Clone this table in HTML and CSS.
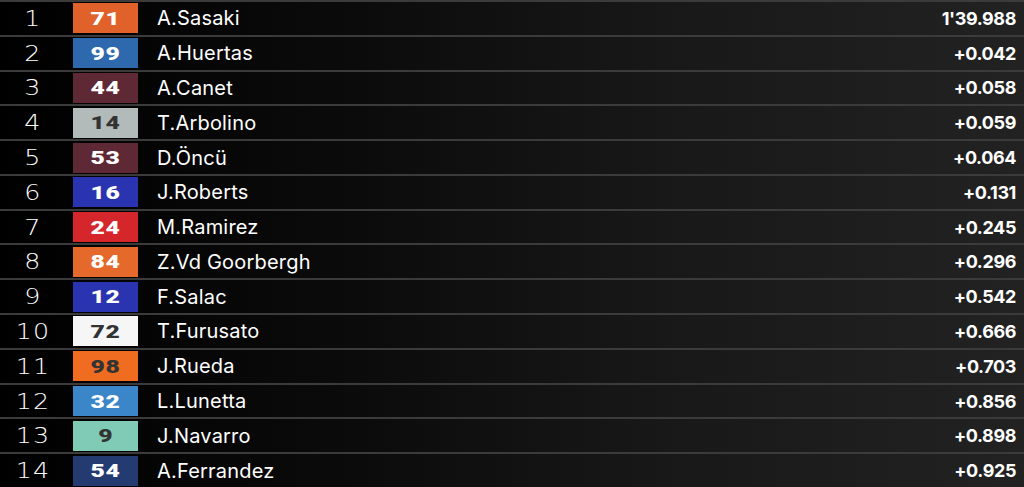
FILE: index.html
```html
<!DOCTYPE html>
<html>
<head>
<meta charset="utf-8">
<link rel="stylesheet" href="styles.css">
</head>
<body>
<div class="board">
  <div class="row"><span class="pos">1</span><span class="badge b-orange"><span class="num">71</span></span><span class="name">A.Sasaki</span><span class="time">1'39.988</span></div>
  <div class="row"><span class="pos">2</span><span class="badge b-blue"><span class="num">99</span></span><span class="name">A.Huertas</span><span class="time">+0.042</span></div>
  <div class="row"><span class="pos">3</span><span class="badge b-maroon"><span class="num">44</span></span><span class="name">A.Canet</span><span class="time">+0.058</span></div>
  <div class="row"><span class="pos">4</span><span class="badge b-grey dark"><span class="num">14</span></span><span class="name">T.Arbolino</span><span class="time">+0.059</span></div>
  <div class="row"><span class="pos">5</span><span class="badge b-maroon"><span class="num">53</span></span><span class="name">D.Öncü</span><span class="time">+0.064</span></div>
  <div class="row"><span class="pos">6</span><span class="badge b-royal"><span class="num">16</span></span><span class="name">J.Roberts</span><span class="time">+0.131</span></div>
  <div class="row"><span class="pos">7</span><span class="badge b-red"><span class="num">24</span></span><span class="name">M.Ramirez</span><span class="time">+0.245</span></div>
  <div class="row"><span class="pos">8</span><span class="badge b-orange2"><span class="num">84</span></span><span class="name">Z.Vd Goorbergh</span><span class="time">+0.296</span></div>
  <div class="row"><span class="pos">9</span><span class="badge b-royal"><span class="num">12</span></span><span class="name">F.Salac</span><span class="time">+0.542</span></div>
  <div class="row"><span class="pos">10</span><span class="badge b-white dark"><span class="num">72</span></span><span class="name">T.Furusato</span><span class="time">+0.666</span></div>
  <div class="row"><span class="pos">11</span><span class="badge b-orange3 dark"><span class="num">98</span></span><span class="name">J.Rueda</span><span class="time">+0.703</span></div>
  <div class="row"><span class="pos">12</span><span class="badge b-sky"><span class="num">32</span></span><span class="name">L.Lunetta</span><span class="time">+0.856</span></div>
  <div class="row"><span class="pos">13</span><span class="badge b-teal dark"><span class="num">9</span></span><span class="name">J.Navarro</span><span class="time">+0.898</span></div>
  <div class="row"><span class="pos">14</span><span class="badge b-navy"><span class="num">54</span></span><span class="name">A.Ferrandez</span><span class="time">+0.925</span></div>
</div>
</body>
</html>
```

FILE: styles.css
```css
html, body {
  margin: 0;
  padding: 0;
  background: #000;
}
.board {
  width: 1024px;
  height: 487px;
  display: grid;
  grid-template-rows: repeat(14, 1fr);
  background: linear-gradient(to right, #000 0%, #0b0b0b 35%, #181818 65%, #222 100%);
  font-family: "Inter", "Noto Sans", sans-serif;
  color: #fff;
  overflow: hidden;
}
.row {
  display: flex;
  align-items: center;
  border-top: 2px solid #3b3b3b;
  box-sizing: border-box;
}
.pos {
  width: 66px;
  text-align: center;
  font-family: "DejaVu Sans", sans-serif;
  font-weight: 200;
  font-size: 22px;
  letter-spacing: 1px;
  transform: scaleX(1.15);
}
.badge {
  margin-left: 7px;
  width: 65px;
  height: 30px;
  display: flex;
  align-items: center;
  justify-content: center;
  color: #fff;
}
.num {
  display: inline-block;
  font-family: "Roboto", "DejaVu Sans", sans-serif;
  font-weight: 900;
  font-size: 19px;
  letter-spacing: 0.5px;
  transform: scaleX(1.3);
}
.badge.dark { color: #333; }
.b-orange { background: #e0622a; }
.b-orange2 { background: #e5692b; }
.b-orange3 { background: #f06c20; }
.b-blue { background: #2f69ad; }
.b-maroon { background: #5e2935; }
.b-grey { background: #b3baba; }
.b-royal { background: #2a34b0; }
.b-red { background: #d5262c; }
.b-white { background: #f6f6f6; }
.b-sky { background: #3a86c8; }
.b-teal { background: #7fcbb6; }
.b-navy { background: #243b72; }
.name {
  margin-left: 19px;
  font-size: 20px;
  letter-spacing: 0.2px;
  flex: 1;
}
.time {
  margin-right: 8px;
  font-size: 18px;
  font-weight: 700;
  letter-spacing: -0.4px;
}
```
